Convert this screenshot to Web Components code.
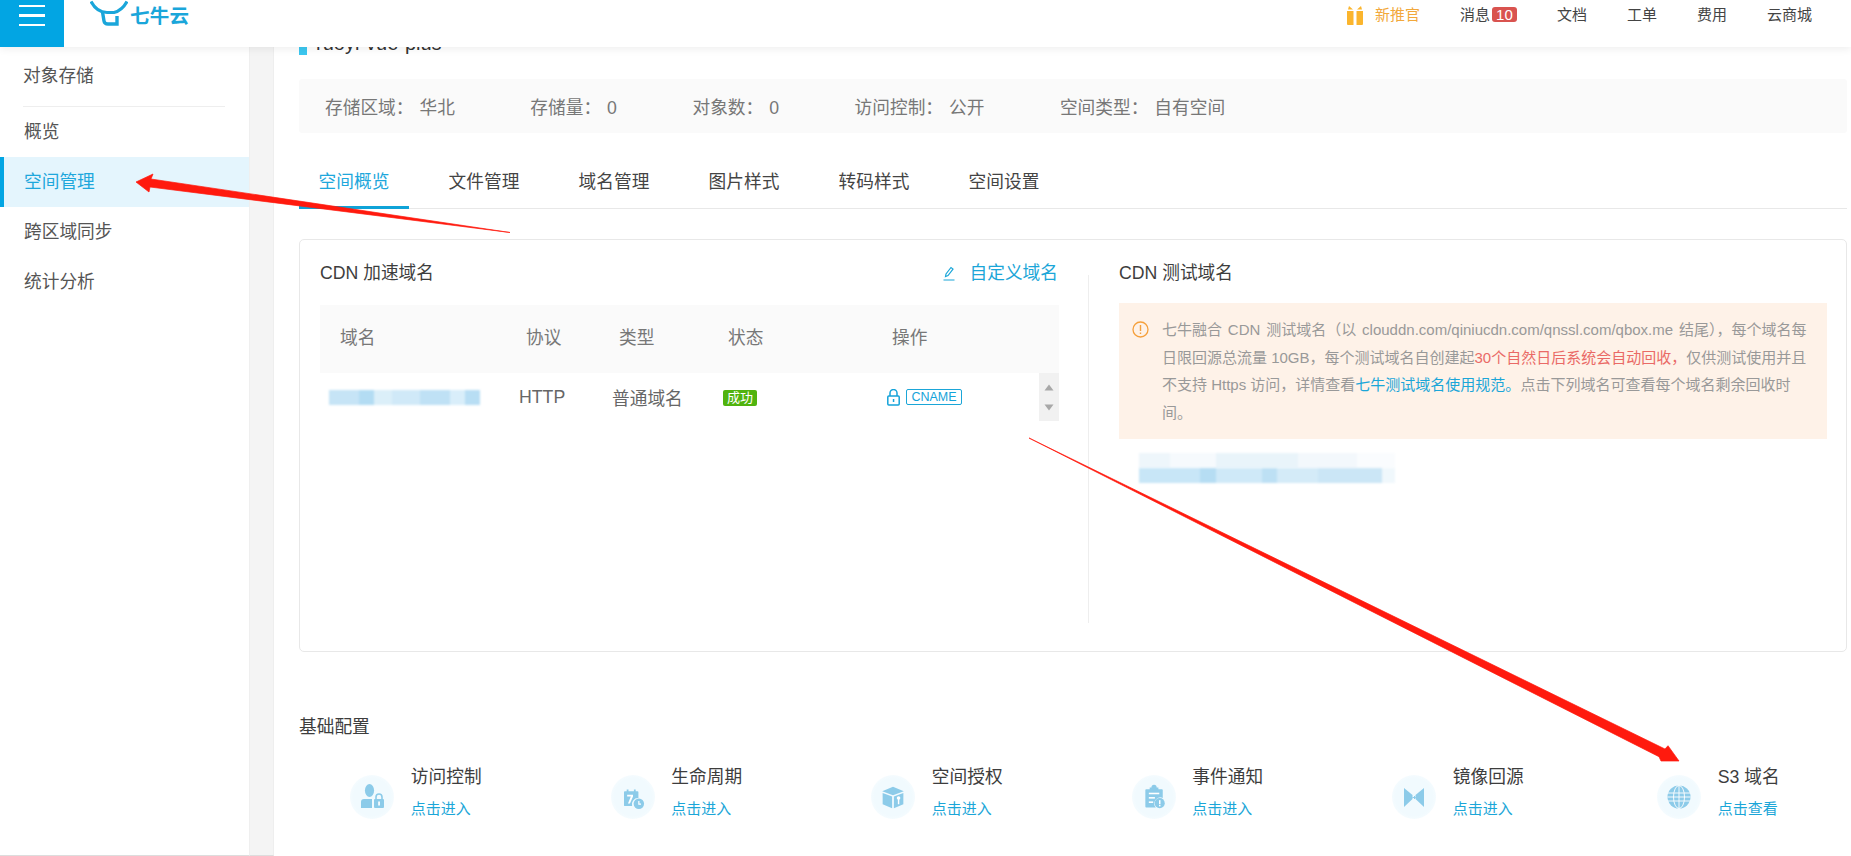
<!DOCTYPE html>
<html lang="zh-CN">
<head>
<meta charset="utf-8">
<title>七牛云</title>
<style>
html,body{margin:0;padding:0;width:1851px;height:856px;overflow:hidden;background:#fff}
body{font-family:"Liberation Sans","Noto Sans CJK SC",sans-serif;color:#333}
</style>
</head>
<body>
<qn-app></qn-app>
<script>
const BASE=':host{box-sizing:border-box}*{box-sizing:border-box}';
function def(name,css,html,setup){
  customElements.define(name,class extends HTMLElement{
    constructor(){super();const r=this.attachShadow({mode:'open'});
      r.innerHTML='<style>'+BASE+css+'</style>'+(typeof html==='function'?html(this):html);}
    connectedCallback(){if(setup)setup(this)}
  });
}
const ICONS={
 person:'<ellipse cx="12.5" cy="8.5" rx="4.6" ry="6.5"/><path d="M4 26v-6q0-3 3-3h8v9z"/><path d="M19 17v-2a3 3 0 0 1 6 0v2" fill="none" stroke="#8ccbe9" stroke-width="1.6"/><rect x="17" y="17" width="10" height="9" rx="1"/><rect x="21.2" y="19.5" width="1.7" height="4" fill="#fff"/>',
 calendar:'<g transform="translate(1.5 2) scale(.9)"><path d="M6 8h2V6h2v2h6V6h2v2h2a1 1 0 0 1 1 1v6.500a7 7 0 0 0-7 9H6a1 1 0 0 1-1-1V9a1 1 0 0 1 1-1z"/><path d="M8.500 12h6.500v1.800l-3.400 8h-2.200l3.200-7.800H8.500z" fill="#fff"/><circle cx="21.500" cy="22" r="5.800"/><path d="M21.500 18.800v3.600h2.400" fill="none" stroke="#fff" stroke-width="1.300"/></g>',
 cube:'<g transform="translate(1.5 2) scale(.9)"><path d="M15 3 27 8 15 12.500 3 8z"/><path d="M3.500 10 14 14v13L3.500 22.500z"/><path d="M16 14 26.500 10v12.500L16 27z"/><circle cx="21.200" cy="15.600" r="2" fill="#fff"/><rect x="20.400" y="16.500" width="1.600" height="6" fill="#fff"/></g>',
 clip:'<g transform="translate(2 2) scale(.87)"><path d="M6 6h4V4h2a3 3 0 0 1 6 0h2v2h4a1 1 0 0 1 1 1v9a7 7 0 0 0-8 11H6a1 1 0 0 1-1-1V7a1 1 0 0 1 1-1z"/><rect x="9" y="10" width="12" height="1.800" fill="#fff"/><rect x="9" y="15" width="7" height="1.800" fill="#fff"/><rect x="9" y="20" width="5" height="1.800" fill="#fff"/><circle cx="21.500" cy="22" r="5.800"/><rect x="20.700" y="18.600" width="1.700" height="4.600" fill="#fff"/><rect x="20.700" y="24" width="1.700" height="1.700" fill="#fff"/></g>',
 mirror:'<path d="M5 6 13.500 13v4L5 25z"/><path d="M25 6 16.500 13v4l8.500 8z"/><path d="M13.500 15.500h2.600M15 14 16.500 15.500 15 17" fill="none" stroke="#8ccbe9" stroke-width="1"/>',
 globe:'<circle cx="15" cy="15" r="11.500"/><g fill="none" stroke="#fff" stroke-width=".9"><ellipse cx="15" cy="15" rx="5.500" ry="11.500"/><path d="M15 3.500v23M4 11h22M4 19h22M3.500 15h23"/></g>'
};

def('qn-topbar',`:host{display:flex;position:absolute;top:0;left:0;width:1851px;height:47px;background:#fff;box-shadow:0 2px 8px rgba(0,0,0,.07);z-index:5;font-size:15px;color:#444}
.burger{width:64px;height:47px;background:#02a5e3;flex:none;display:flex;flex-direction:column;padding:5px 19px 0;gap:7px}
.burger i{display:block;height:2.4px;background:#fff;flex:none}
.logo{display:flex;margin-left:26px;color:#1aa6da;flex:none}
.logo svg{display:block;flex:none;width:38px}
.logo b{font-size:19.5px;line-height:32px;letter-spacing:.2px;margin-left:2px;font-weight:700}
.right{margin-left:auto;display:flex;gap:40px;padding-right:39px;line-height:30px;height:30px}
.promo{display:flex;color:#f2a83b}
.promo svg{margin:5px 11px 0 0;flex:none}
.msg{display:flex}
.badge{background:#d9534f;color:#fff;border-radius:3px;width:25px;height:15px;line-height:15px;margin:7px 0 0 2px;text-align:center;font-size:15px}
`,`<div class="burger"><i></i><i></i><i></i></div>
<div class="logo"><svg width="38" height="30" viewBox="0 0 38 30"><path d="M1 1.500C5 9 10 12.500 17 12.500h7C30 11 34 7 37 1.500" fill="none" stroke="#1aa6da" stroke-width="3.200"/><path d="M12.500 12l1.500 9q.5 3 4 3h9V16" fill="none" stroke="#1aa6da" stroke-width="3.400"/></svg><b>七牛云</b></div>
<div class="right"><span class="promo"><svg width="18" height="20" viewBox="0 0 18 20"><path d="M1 6h6.500v14H2a1 1 0 0 1-1-1zM10.500 6H17v13a1 1 0 0 1-1 1h-5.500z" fill="#fbb52d"/><path d="M2 4.500 3 1l4 3.500zM16 4.500 15 1l-4 3.500z" fill="#fbb52d"/></svg>新推官</span><span class="msg">消息<span class="badge">10</span></span><span>文档</span><span>工单</span><span>费用</span><span>云商城</span></div>`);

def('qn-side-item',`:host{display:block;height:50px;line-height:50px;padding-left:24px;font-size:17.7px;color:#555;margin-top:0}
:host([active]){background:#e4f5fd;color:#1ea7dc;border-left:4px solid #02a5e3;padding-left:20px}`,`<slot></slot>`);

def('qn-sidebar',`:host{display:block;background:#fff;padding-top:47px;border-bottom:1px solid #ddd;height:856px}
.h{height:60px;padding-top:9px;margin:0 24px 0 23px;line-height:40px;font-size:17.7px;color:#555;border-bottom:1px solid #eee}
`,`<div class="h">对象存储</div><slot></slot>`);

def('qn-title',`:host{display:flex;align-items:flex-end;height:36px;margin-top:19px}
.sq{width:8px;height:8px;background:#3cc7f0;flex:none}
.t{font-size:20px;line-height:28px;margin:9.5px 0 0 9px;color:#333;align-self:flex-start}`,`<div class="sq"></div><div class="t"><slot></slot></div>`);

def('qn-info',`:host{display:flex;height:54px;margin-top:24px;background:#fafafa;border-radius:3px;padding-left:26px;gap:75.5px;align-items:center;font-size:17.7px;color:#777}
`,`<slot></slot>`);
def('qn-stat',`:host{display:flex;align-items:baseline}.v{margin-left:6px}`,d=>`<span>${d.getAttribute('label')}：</span><span class="v"><slot></slot></span>`);

def('qn-tabs',`:host{display:flex;margin-top:24px;height:52px;border-bottom:1px solid #e8e8e8;gap:20px}`,`<slot></slot>`);
def('qn-tab',`:host{display:block;width:110px;height:52px;line-height:50px;text-align:center;font-size:17.7px;color:#444;flex:none}
:host([active]){color:#1ea7dc;border-bottom:3px solid #0fa3d8}`,`<slot></slot>`);

def('qn-blur',`:host{display:block;height:15px;filter:blur(.9px)}`,`<slot></slot>`);

def('qn-domain-table',`:host{display:block;margin-top:17px;font-size:17.7px;color:#666}
.g{display:grid;grid-template-columns:199px 93px 111px 164px 170px}
.head{height:68px;background:#fafafa;line-height:66px;color:#777}
.row{height:48px;align-items:center;position:relative;color:#666}
.ml19{margin-left:20px}.ml6{margin-left:7px}.ml7{margin-left:7px}.ml4{margin-left:5px}.ml5{margin-left:5px}
qn-blur{margin-left:9px;width:151px;background:linear-gradient(90deg,#c6e4f6 0 20%,#b3dcf3 20% 30%,#dbeff9 30% 42%,#d0e9f8 42% 60%,#bfe1f5 60% 80%,#d9eefa 80% 90%,#b8def4 90%)}
.ok{display:inline-block;width:34px;height:16px;line-height:16px;background:#50b30e;color:#fff;font-size:13px;text-align:center;border-radius:2px;vertical-align:middle}
.ops{display:flex;align-items:center;gap:6px;color:#14a3d9}
.cname{border:1px solid #1ba6d8;border-radius:2px;height:16px;width:56px;line-height:14px;font-size:12.5px;text-align:center}
.sb{position:absolute;right:0;top:0;width:20.5px;height:48px;background:#f1f1f1;display:flex;flex-direction:column;justify-content:space-between;align-items:center;padding:11px 0 10px}
.sb svg{display:block}
`,`<div class="g head"><span class="ml19">域名</span><span class="ml6">协议</span><span class="ml7">类型</span><span class="ml4">状态</span><span class="ml5">操作</span></div>
<div class="g row"><qn-blur></qn-blur><span>HTTP</span><span>普通域名</span><span><span class="ok">成功</span></span><span class="ops"><svg width="13" height="17" viewBox="0 0 13 17"><path d="M3 7V4a3.500 3.500 0 0 1 7 0v3" fill="none" stroke="#14a3d9" stroke-width="1.500"/><rect x=".8" y="7" width="11.400" height="9" rx="1" fill="none" stroke="#14a3d9" stroke-width="1.500"/><rect x="5.800" y="10" width="1.500" height="3" fill="#14a3d9"/></svg><span class="cname">CNAME</span></span>
<div class="sb"><svg width="10" height="7" viewBox="0 0 10 7"><path d="M5 .5 9.500 6.500H.5z" fill="#a8a8a8"/></svg><svg width="10" height="7" viewBox="0 0 10 7"><path d="M5 6.500 9.500 .5H.5z" fill="#a8a8a8"/></svg></div></div>`);

def('qn-left-panel',`:host{display:block;padding:18px 29px 0 20px}
.t{display:flex;justify-content:space-between;line-height:30px;font-size:17.7px;color:#3d3d3d}
.e{display:flex;align-items:center;color:#1ba6d8;gap:15px;margin-right:1px}
.e svg{display:block}
`,`<div class="t"><span>CDN 加速域名</span><span class="e"><svg width="12" height="15" viewBox="0 0 12 15"><path d="M2.500 10.500 3 8l5-6.500 2 1.500-5 6.500zM.5 14h11" fill="none" stroke="#1ba6d8" stroke-width="1.200"/></svg>自定义域名</span></div><qn-domain-table></qn-domain-table>`);

def('qn-right-panel',`:host{display:block;position:relative;padding:18px 19px 0 31px}
:host::before{content:"";position:absolute;left:0;top:35px;bottom:28px;width:1px;background:#eee}
.t{line-height:30px;font-size:17.7px;color:#3d3d3d}
.a{margin-top:15px;height:136px;background:#fef2e8;padding:13px 0 0 13px;display:flex;font-size:15px;line-height:27.7px;color:#999}
.a svg{flex:none;margin-top:5px;display:block}
.x{margin-left:13px;white-space:nowrap}
.x div{display:block}
.x .w{word-spacing:1.7px}
.r{color:#ea6a66}.l{color:#1ba6d8}
.bl{margin:14px 0 0 20px}
.b1{width:256px;height:15px;filter:blur(1.2px);background:linear-gradient(90deg,#eef6fb 0 12%,#f6fafd 12% 30%,#e9f4fa 30% 62%,#f3f8fc 62% 85%,#fafcfe 85%)}
.b2{width:256px;height:15px;filter:blur(.9px);background:linear-gradient(90deg,#c8e6f7 0 24%,#b6ddf3 24% 30%,#cfe9f8 30% 48%,#bde0f4 48% 54%,#d4ebf8 54% 70%,#cbe6f6 70% 95%,#f0f8fc 95%)}
`,`<div class="t">CDN 测试域名</div>
<div class="a"><svg width="17" height="17" viewBox="0 0 17 17"><circle cx="8.500" cy="8.500" r="7.500" fill="none" stroke="#f5a03c" stroke-width="1.300"/><path d="M8.500 4v6M8.500 11.500v1.500" stroke="#f5a03c" stroke-width="1.400"/></svg>
<div class="x"><div class="w">七牛融合 CDN 测试域名（以 clouddn.com/qiniucdn.com/qnssl.com/qbox.me 结尾），每个域名每</div><div>日限回源总流量 10GB，每个测试域名自创建起<span class="r">30个自然日后系统会自动回收，</span>仅供测试使用并且</div><div>不支持 Https 访问，详情查看<span class="l">七牛测试域名使用规范。</span>点击下列域名可查看每个域名剩余回收时</div><div>间。</div></div></div>
<div class="bl"><div class="b1"></div><div class="b2"></div></div>`);

def('qn-card',`:host{display:grid;grid-template-columns:788px 1fr;height:413px;margin-top:30px;border:1px solid #e8e8e8;border-radius:5px;background:#fff}`,`<slot></slot>`);

def('qn-config',`:host{display:block}
.h{margin-top:60px;line-height:30px;font-size:17.7px;color:#3d3d3d}
.g{display:grid;grid-template-columns:repeat(6,260.5px);margin-top:20px}`,`<div class="h">基础配置</div><div class="g"><slot></slot></div>`);

def('qn-config-item',`:host{display:flex;justify-content:center}
.in{display:flex;padding-right:26.5px}
.c{width:44px;height:44px;border-radius:50%;background:radial-gradient(circle,#f1fafe 0 60%,#fff 100%);margin:13px 16.4px 0 0;display:flex;align-items:center;justify-content:center;flex:none}
.c svg{fill:#8ccbe9;display:block}
.t{line-height:30px;font-size:17.7px;color:#3d3d3d;white-space:nowrap}
.a{line-height:30px;margin-top:2px;font-size:15px;color:#1ba6d8;white-space:nowrap}
`,d=>`<div class="in"><div class="c"><svg width="30" height="30" viewBox="0 0 30 30">${ICONS[d.getAttribute('icon')]}</svg></div><div><div class="t">${d.getAttribute('name')}</div><div class="a">${d.getAttribute('action')||'点击进入'}</div></div></div>`);

def('qn-arrows',`:host{position:absolute;left:0;top:0;width:1851px;height:856px;pointer-events:none;z-index:6}svg{display:block}`,
`<svg width="1851" height="856" viewBox="0 0 1851 856"><g fill="#ff1a0e" stroke="#ff1a0e" stroke-width=".7" stroke-linejoin="round"><polygon points="510,232.500 151,179 153,174 136,182 149,192 150,187"/><polygon points="1029,438 1665,749 1668,745.700 1679,761 1661,761 1659,756.700"/></g></svg>`);

def('qn-app',`:host{display:grid;grid-template-columns:249px 25px 1fr;width:1851px;height:856px;position:relative;overflow:hidden}
.gut{background:#f4f4f4;border-left:1px solid #efefef;border-right:1px solid #eee;border-bottom:1px solid #ddd}
main{padding:0 4px 0 25px;min-width:0;height:856px;overflow:hidden}
`,`<qn-topbar></qn-topbar>
<qn-sidebar><qn-side-item>概览</qn-side-item><qn-side-item active>空间管理</qn-side-item><qn-side-item>跨区域同步</qn-side-item><qn-side-item>统计分析</qn-side-item></qn-sidebar>
<div class="gut"></div>
<main>
<qn-title>ruoyi-vue-plus</qn-title>
<qn-info><qn-stat label="存储区域">华北</qn-stat><qn-stat label="存储量">0</qn-stat><qn-stat label="对象数">0</qn-stat><qn-stat label="访问控制">公开</qn-stat><qn-stat label="空间类型">自有空间</qn-stat></qn-info>
<qn-tabs><qn-tab active>空间概览</qn-tab><qn-tab>文件管理</qn-tab><qn-tab>域名管理</qn-tab><qn-tab>图片样式</qn-tab><qn-tab>转码样式</qn-tab><qn-tab>空间设置</qn-tab></qn-tabs>
<qn-card><qn-left-panel></qn-left-panel><qn-right-panel></qn-right-panel></qn-card>
<qn-config>
<qn-config-item icon="person" name="访问控制"></qn-config-item>
<qn-config-item icon="calendar" name="生命周期"></qn-config-item>
<qn-config-item icon="cube" name="空间授权"></qn-config-item>
<qn-config-item icon="clip" name="事件通知"></qn-config-item>
<qn-config-item icon="mirror" name="镜像回源"></qn-config-item>
<qn-config-item icon="globe" name="S3 域名" action="点击查看"></qn-config-item>
</qn-config>
</main>
<qn-arrows></qn-arrows>`);
</script>
</body>
</html>
